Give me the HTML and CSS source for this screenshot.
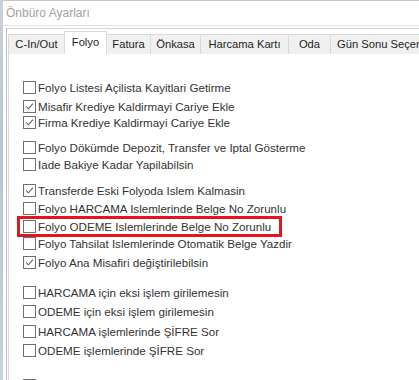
FILE: index.html
```html
<!DOCTYPE html>
<html lang="tr">
<head>
<meta charset="UTF-8">
<title>Önbüro Ayarları</title>
<link rel="stylesheet" href="styles.css">
</head>
<body>
<div class="screen">
  <div class="desk-edge"></div>
  <div class="window">
    <div class="titlebar">Önbüro Ayarları</div>
    <div class="client">
      <div class="tabs">
        <div class="tab t-cin">C-In/Out</div>
        <div class="tab active t-folyo">Folyo</div>
        <div class="tab t-fatura">Fatura</div>
        <div class="tab t-onkasa">Önkasa</div>
        <div class="tab t-harcama">Harcama Kartı</div>
        <div class="tab t-oda">Oda</div>
        <div class="tab t-gun">Gün Sonu Seçenekleri</div>
      </div>
      <div class="page">
        <label class="row"><span class="box"></span>Folyo Listesi Açilista Kayitlari Getirme</label>
        <label class="row"><span class="box"><svg viewBox="0 0 13 13"><path d="M2.5 6.5 5.2 9.2 10.5 3.2"/></svg></span>Misafir Krediye Kaldirmayi Cariye Ekle</label>
        <label class="row s0"><span class="box"><svg viewBox="0 0 13 13"><path d="M2.5 6.5 5.2 9.2 10.5 3.2"/></svg></span>Firma Krediye Kaldirmayi Cariye Ekle</label>

        <label class="row gap"><span class="box"></span>Folyo Dökümde Depozit, Transfer ve Iptal Gösterme</label>
        <label class="row s1"><span class="box"></span>Iade Bakiye Kadar Yapilabilsin</label>

        <label class="row gap-m"><span class="box"><svg viewBox="0 0 13 13"><path d="M2.5 6.5 5.2 9.2 10.5 3.2"/></svg></span>Transferde Eski Folyoda Islem Kalmasin</label>
        <label class="row s2"><span class="box"></span>Folyo HARCAMA Islemlerinde Belge No Zorunlu</label>
        <label class="row s2"><span class="box"></span>Folyo ODEME Islemlerinde Belge No Zorunlu<span class="highlight"></span></label>
        <label class="row s1"><span class="box"></span>Folyo Tahsilat Islemlerinde Otomatik Belge Yazdir</label>
        <label class="row"><span class="box"><svg viewBox="0 0 13 13"><path d="M2.5 6.5 5.2 9.2 10.5 3.2"/></svg></span>Folyo Ana Misafiri değiştirilebilsin</label>

        <label class="row gap-l"><span class="box"></span>HARCAMA için eksi işlem girilemesin</label>
        <label class="row"><span class="box"></span>ODEME için eksi işlem girilemesin</label>
        <label class="row s4"><span class="box"></span>HARCAMA işlemlerinde ŞİFRE Sor</label>
        <label class="row"><span class="box"></span>ODEME işlemlerinde ŞİFRE Sor</label>

        <label class="row gap-xl"><span class="box"></span>Folyo Faturalarinda Faturlalar Bolunmesin</label>
      </div>
    </div>
  </div>
</div>
</body>
</html>
```
FILE: styles.css
```css
:root{
  --line:#d9d9d9;
  --frame:#bcbcbc;
  --text:#333;
  --font:"Liberation Sans",Arial,sans-serif;
}
*{box-sizing:border-box;}
html,body{margin:0;height:100%;overflow:hidden;background:#fff;}
body{font-family:var(--font);font-size:11.6px;color:var(--text);}

.screen{display:flex;height:100%;}
.desk-edge{width:3px;flex:none;background:linear-gradient(180deg,#c9d2d8,#b9c6cf 40%,#c7d3da);}

.window{flex:none;width:600px;border-top:1px solid #c4c4c4;display:flex;flex-direction:column;}
.titlebar{height:25px;line-height:25px;padding-left:3px;color:#a3a3a3;font-size:12px;border-bottom:1px solid #e2e2e2;margin-bottom:2px;}

.client{flex:1;margin-left:3px;border-left:1px solid var(--frame);border-top:1px solid #d6d6d6;padding:2px 0 0 1px;display:flex;flex-direction:column;}

.tabs{display:flex;align-items:flex-end;height:23px;position:relative;z-index:1;}
.tab{flex:none;height:20px;line-height:19px;text-align:center;background:#f0f0f0;border:1px solid var(--line);border-bottom:0;margin-right:-1px;color:#1e1e1e;white-space:nowrap;font-size:11.2px;overflow:hidden;}
.tab.active{height:23px;line-height:20px;background:#fff;position:relative;}
.t-cin{width:57px;}
.t-folyo{width:43px;}
.t-fatura{width:45px;}
.t-onkasa{width:51px;}
.t-harcama{width:89px;}
.t-oda{width:43px;}
.t-gun{width:130px;text-align:left;padding-left:6px;}

.page{flex:1;margin-top:-1px;border:1px solid var(--line);background:#fff;padding:25px 0 0 14px;display:flex;flex-direction:column;}

/* row spacing follows the original form, which is not quite regular */
.row{display:flex;align-items:center;height:16px;margin-top:3px;white-space:nowrap;position:relative;}
.row:first-child{margin-top:0;}
.row.s0{margin-top:0;}
.row.s1{margin-top:1px;}
.row.s2{margin-top:2px;}
.row.s4{margin-top:4px;}
.row.gap{margin-top:9px;}
.row.gap-m{margin-top:10px;}
.row.gap-l{margin-top:14px;}
.row.gap-xl{margin-top:19px;}

.box{width:13px;height:13px;flex:none;border:1px solid #707070;background:#fff;margin-right:2px;display:flex;}
.box svg{width:100%;height:100%;fill:none;stroke:#555;stroke-width:1.2;}

.highlight{position:absolute;left:-6px;top:-2px;width:265px;height:21px;border:3px solid #e5141d;pointer-events:none;}
```
